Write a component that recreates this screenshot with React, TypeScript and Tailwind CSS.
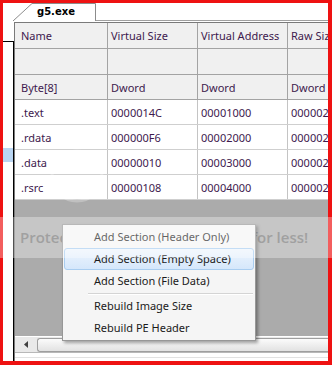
import React from "react";

const cols = [93, 90, 90, 90];

type Row = { cells: string[]; h: string; header?: boolean };

const rows: Row[] = [
  { cells: ["Name", "Virtual Size", "Virtual Address", "Raw Size"], h: "h-[26px]", header: true },
  { cells: ["", "", "", ""], h: "h-[26px]", header: true },
  { cells: ["Byte[8]", "Dword", "Dword", "Dword"], h: "h-[25px]", header: true },
  { cells: [".text", "0000014C", "00001000", "00000200"], h: "h-[25px]" },
  { cells: [".rdata", "000000F6", "00002000", "00000200"], h: "h-[25px]" },
  { cells: [".data", "00000010", "00003000", "00000200"], h: "h-[25px]" },
  { cells: [".rsrc", "00000108", "00004000", "00000200"], h: "h-[25px]" },
];

const menuItems = [
  "Add Section (Header Only)",
  "Add Section (Empty Space)",
  "Add Section (File Data)",
  "-",
  "Rebuild Image Size",
  "Rebuild PE Header",
];

export default function App() {
  return (
    <div className="relative w-[332px] h-[365px] overflow-hidden bg-[#ee1212] pt-[3px] pl-[3px] pr-[4px] pb-[4px] font-['Noto_Sans',sans-serif]">
      <div className="w-full h-full bg-white flex flex-col">
        {/* tab strip */}
        <div className="h-[18px] flex shrink-0">
          <div className="w-[10px] shrink-0" />
          <div className="relative w-[83px] h-[18px] shrink-0">
            <svg className="absolute inset-0" width="83" height="18" viewBox="0 0 83 18">
              <polyline points="0,18 19,0.5 82.5,0.5 82.5,18" fill="white" stroke="#8c8c8c" strokeWidth="1" />
            </svg>
            <span className="absolute left-[24px] top-[2px] text-[10px] leading-[14px] font-bold text-black font-['DejaVu_Sans',sans-serif]">
              g5.exe
            </span>
          </div>
          <div className="flex-1 border-b border-[#a0a0a0]" />
        </div>

        {/* body */}
        <div className="flex-1 flex min-h-0">
          {/* left tree panel */}
          <div className="w-[11px] shrink-0 flex flex-col">
            <div className="h-[20px] shrink-0" />
            <div className="flex-1 border-t border-r border-black">
              <div className="mt-[106px] h-[14px] bg-[#b9d5f2]" />
            </div>
          </div>

          {/* grid panel */}
          <div className="flex-1 flex flex-col mt-[1px] border-t border-l border-[#7a7a7a] min-w-0">
            <div className="overflow-hidden">
              {rows.map((r, i) => (
                <div key={i} className={`flex ${r.h} ${r.header ? "bg-[#f0f0f0] border-b border-[#a3a3a3]" : "bg-white border-b border-[#cfcfcf]"}`}>
                  {r.cells.map((c, j) => (
                    <div
                      key={j}
                      style={{ width: cols[j] }}
                      className={`shrink-0 flex items-center pt-[2px] text-[11px] text-[#3e1a4e] whitespace-nowrap overflow-hidden border-r ${r.header ? "border-[#a3a3a3]" : "border-[#c4c4c4]"} ${j === 0 ? "pl-[6px]" : "pl-[3px]"}`}
                    >
                      {c}
                    </div>
                  ))}
                </div>
              ))}
            </div>
            <div className="flex-1 bg-[#ababab]" />
            {/* scrollbar */}
            <div className="h-[16px] shrink-0 bg-[#e9e9e9] border-t border-white flex items-center">
              <div className="w-[22px] h-full flex items-center justify-center">
                <svg width="4" height="7" viewBox="0 0 4 7">
                  <polygon points="4,0 0,3.5 4,7" fill="#404040" />
                </svg>
              </div>
              <div className="flex-1 h-[14px] rounded-l-[3px] border border-r-0 border-[#9f9f9f] bg-gradient-to-b from-[#fbfbfb] to-[#e2e2e2]" />
            </div>
            <div className="h-[9px] shrink-0 bg-white border-t border-[#b8b8b8] flex flex-col">
              <div className="h-[4px]" />
              <div className="border-t border-[#e2e2e2]" />
            </div>
          </div>
        </div>
      </div>

      {/* watermark text (under menu) */}
      <div className="absolute left-[20px] top-[217px] h-[41px] flex items-center text-[15px] font-semibold text-[#747474] whitespace-nowrap font-['Open_Sans',sans-serif]">
        Protect more of your memories for less!
      </div>

      {/* context menu */}
      <div className="absolute left-[62px] top-[224px] w-[194px] bg-[#f5f5f5] border border-[#979797] py-[1px] shadow-[2px_2px_3px_rgba(0,0,0,0.35)]">
        {menuItems.map((m, i) =>
          m === "-" ? (
            <div key={i} className="h-[3px] flex flex-col pl-[25px] pr-[2px]">
              <div className="mt-[1px] border-t border-[#d4d4d4]" />
              <div className="border-t border-white" />
            </div>
          ) : (
            <div key={i} className="h-[22px] px-[1px]">
              <div
                className={`h-full flex items-center pl-[29px] text-[11px] whitespace-nowrap rounded-[3px] border ${
                  i === 1
                    ? "border-[#a9cdf0] bg-gradient-to-b from-[#eef5fd] to-[#d5e7fb] text-[#1a1a1a]"
                    : "border-transparent text-[#1a1a1a]"
                }`}
              >
                {m}
              </div>
            </div>
          )
        )}
      </div>

      {/* photobucket-like overlay */}
      <div className="absolute left-0 right-0 top-[217px] h-[41px] bg-white/[0.32] pointer-events-none" />
      <svg className="absolute left-0 top-0 pointer-events-none" width="332" height="365">
        <circle cx="77" cy="176" r="25" fill="none" stroke="white" strokeOpacity="0.25" strokeWidth="3" />
      </svg>
    </div>
  );
}
